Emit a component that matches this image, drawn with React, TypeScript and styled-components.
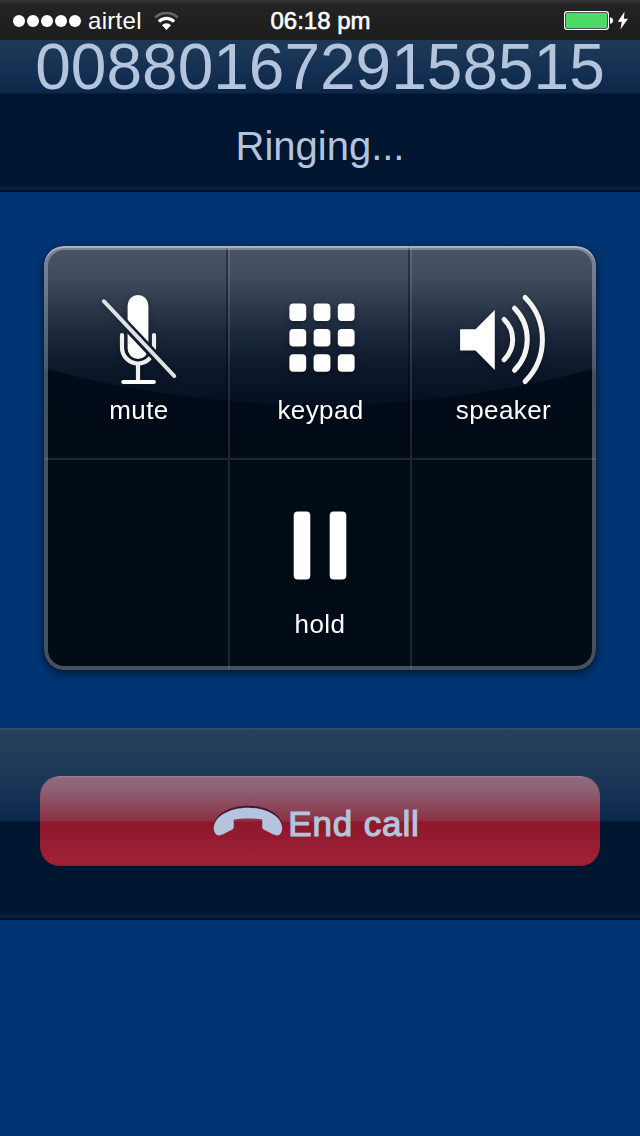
import React from "react";
import styled, { createGlobalStyle, css } from "styled-components";

const Global = createGlobalStyle`
  html, body { margin: 0; padding: 0; }
  body { background: #003472; font-family: "Liberation Sans", Arial, sans-serif; }
`;

const glossBar = css`
  background: linear-gradient(
    to bottom,
    #35506b 0, #25405c 3px, #233e5b 20px, #1b3656 52px, #0f2b4e 84px, #0b2749 93px,
    #02162e 94px, #001530 96px, #001530 186px,
    #0a1f3a 187px, #0c213d 190px, #000d22 190px, #000d22 192px
  );
`;

const Screen = styled.main`
  width: 640px;
  height: 1136px;
  display: flex;
  flex-direction: column;
  background: #003472;
  overflow: hidden;
`;

const Header = styled.header`
  ${glossBar}
  height: 192px;
  flex: none;
  color: #b3c4dc;
  text-align: center;
`;

const StatusBar = styled.div`
  height: 40px;
  display: grid;
  grid-template-columns: 1fr auto 1fr;
  align-items: center;
  padding: 2px 11px 0 12px;
  box-sizing: border-box;
  background: linear-gradient(#343434, #232323 5px, #1d1d1d);
  color: #fff;
  font-size: 24px;
  line-height: 26px;
`;

const StatusGroup = styled.div<{ $end?: boolean }>`
  display: flex;
  align-items: center;
  justify-content: ${(p) => (p.$end ? "flex-end" : "flex-start")};
`;

const Dots = styled.div`
  display: flex;
  gap: 2px;
  margin: 0 7px 1px 1px;
`;

const Dot = styled.i`
  width: 12px;
  height: 12px;
  border-radius: 50%;
  background: #fff;
`;

const Carrier = styled.span`
  letter-spacing: 0.3px;
  margin-right: 12px;
`;

const Clock = styled.span`
  -webkit-text-stroke: 0.6px #fff;
`;

const CallerNumber = styled.h1`
  margin: 0;
  height: 54px;
  font-size: 64px;
  font-weight: 400;
  line-height: 55px;
`;

const CallState = styled.p`
  margin: 0;
  padding-top: 29px;
  font-size: 40px;
  line-height: 46px;
`;

const Panel = styled.section`
  position: relative;
  flex: none;
  width: 552px;
  height: 424px;
  margin: 54px 44px 58px;
  display: grid;
  grid-template-columns: 182px 182px 188px;
  grid-template-rows: 212px 212px;
  border-radius: 20px;
  overflow: hidden;
  background:
    radial-gradient(circle 1074px at 276px -915px, transparent 1073px, #010b19 1074px, #010b17 1094px, #020c16 1130px),
    linear-gradient(#4b5567 0, #424c5e 30px, #2b3649 65px, #1a263a 90px, #0c1829 125px, #051121 160px);
  &::after {
    content: "";
    position: absolute;
    inset: 0;
    border-radius: 20px;
    box-shadow: inset 0 2px rgba(215, 218, 230, 0.55), inset 0 0 0 4px rgba(235, 240, 255, 0.3);
    pointer-events: none;
  }
`;

const PanelWrap = styled.div`
  display: flex;
  filter: drop-shadow(0 3px 4px rgba(0, 8, 25, 0.7));
`;

const Cell = styled.button<{ $col: number; $row: number }>`
  border: 0;
  border-left: ${(p) => (p.$col ? "2px solid rgba(255,255,255,0.11)" : "2px solid transparent")};
  border-top: ${(p) => (p.$row ? "2px solid rgba(255,255,255,0.11)" : "2px solid transparent")};
  background: none;
  box-shadow: ${(p) => (p.$col && !p.$row ? "-2px 0 rgba(0,5,15,0.4)" : "none")};
  display: flex;
  flex-direction: column;
  align-items: center;
  box-sizing: border-box;
  color: #fff;
  font: 26px/30px "Liberation Sans", Arial, sans-serif;
  letter-spacing: 0.4px;
  padding: ${(p) => (p.$row ? 39 : 37)}px ${(p) => [0, 0, 2][p.$col]}px 0 ${(p) => (p.$col === 0 ? 4 : p.$row ? 0 : 1)}px;
  margin: 0 ${(p) => (p.$col < 2 ? -2 : 0)}px 0 ${(p) => (p.$col ? 2 : 0)}px;
`;

const CellIcon = styled.svg`
  width: 110px;
  height: 110px;
  flex: none;
  filter: drop-shadow(0 3px 3px rgba(0, 0, 0, 0.35));
`;

const Footer = styled.footer`
  ${glossBar}
  height: 192px;
  flex: none;
  box-sizing: border-box;
  padding: 48px 40px;
`;

const EndButton = styled.button`
  width: 560px;
  height: 90px;
  padding: 0 7px 0 0;
  border: 0;
  border-radius: 20px;
  display: flex;
  align-items: center;
  justify-content: center;
  gap: 5px;
  color: #b3c4dc;
  background: linear-gradient(
    #a08294 0, #8e697d 2px, #8e6478 10px, #8e566a 20px, #8d4053 35px, #8d3044 45px,
    #8c172b 46px, #8f182c 50px, #a12338 88px, #7c1e34 90px
  );
`;

const EndLabel = styled.span`
  padding-top: 6px;
  font: 35px/40px "Liberation Sans", Arial, sans-serif;
  letter-spacing: 0.85px;
  -webkit-text-stroke: 1.2px #b3c4dc;
`;

const rows = [0, 25.5, 50.8];
const cols = [0, 24.2, 48.4];

const MuteIcon = () => (
  <CellIcon viewBox="84 285 110 110">
    <mask id="slashGap" maskUnits="userSpaceOnUse" x="84" y="285" width="110" height="110">
      <rect x="84" y="285" width="110" height="110" fill="#fff" />
      <path d="M103.3 301 174.7 376.7" stroke="#000" strokeWidth="9.5" />
    </mask>
    <g mask="url(#slashGap)">
      <rect x="127.6" y="295" width="20.8" height="64" rx="10.4" fill="#fff" />
      <path d="M122 335V347.5A16 16 0 0 0 154 347.5V335" fill="none" stroke="#eee" strokeWidth="4.2" strokeLinecap="round" />
    </g>
    <path d="M138 363V381" stroke="#eee" strokeWidth="4.2" />
    <path d="M123.3 382H153.8" stroke="#fff" strokeWidth="4.2" strokeLinecap="round" />
    <path d="M103.8 301.2 174.3 376.2" stroke="#dfe1e5" strokeWidth="3.9" strokeLinecap="round" />
  </CellIcon>
);

const KeypadIcon = () => (
  <CellIcon viewBox="266 285 110 110">
    {rows.map((y) =>
      cols.map((x) => (
        <rect key={`${x}-${y}`} x={289.4 + x} y={303.4 + y} width="16.8" height="17.6" rx="4" fill="#fff" />
      )),
    )}
  </CellIcon>
);

const SpeakerIcon = () => (
  <CellIcon viewBox="448.5 285 110 110">
    <path d="M459.6 329.3H475L494.3 310V370L475 350.4H459.6Z" fill="#fff" />
    <g fill="none" stroke="#f4f4f4" strokeWidth="5" strokeLinecap="round">
      <path d="M503.6 319.5A27.8 27.8 0 0 1 503.6 359.7" />
      <path d="M514 308.2A44.2 44.2 0 0 1 514 370.3" />
      <path d="M524.6 297.5A59.6 59.6 0 0 1 524.6 381.5" />
    </g>
  </CellIcon>
);

const HoldIcon = () => (
  <CellIcon viewBox="265 499 110 110">
    <rect x="293.7" y="511.4" width="16.6" height="68" rx="4" fill="#fff" />
    <rect x="329.7" y="511.4" width="16.6" height="68" rx="4" fill="#fff" />
  </CellIcon>
);

const WifiIcon = () => (
  <svg width="25" height="18" viewBox="0 0 25 18" fill="none">
    <path d="M1.2 5.6A16 16 0 0 1 23.8 5.6" stroke="#666" strokeWidth="2.8" />
    <path d="M4.9 9.6A10.8 10.8 0 0 1 20.1 9.6" stroke="#fff" strokeWidth="3.2" />
    <path d="M8 13.2A6.2 6.2 0 0 1 17 13.2L12.5 18Z" fill="#fff" />
  </svg>
);

const BatteryIcon = () => (
  <svg width="65" height="20" viewBox="564 11 65 20">
    <rect x="564.6" y="11.6" width="43.8" height="17.8" rx="2.6" fill="none" stroke="#fff" strokeWidth="1.2" />
    <rect x="566" y="13" width="41" height="15" rx="1.2" fill="#4cd964" />
    <path d="M610 17.2C612 17.5 613 18.8 613 20.5S612 23.5 610 23.8Z" fill="#fff" />
    <path d="M624.6 11.5 617.8 21.8H621.8L620.4 29.5 628 18.8H623.8Z" fill="#fff" />
  </svg>
);

const handset =
  "M248 807.8C230 807.8 213.8 816 213.8 828.5C213.8 832.5 216.500 835.8 219.500 835.4C223 834.800 228 831.500 231 830.200C233.300 829.200 233.800 828.500 233.800 826V819.5C240 818 256 818 262.200 819.5V826C262.200 828.500 262.700 829.200 265 830.200C268 831.500 273 834.800 276.500 835.4C279.500 835.8 282.200 832.5 282.200 828.5C282.200 816 266 807.8 248 807.8Z";

const HandsetIcon = () => (
  <svg width="70" height="34" viewBox="213 804 70 34">
    <path d={handset} transform="translate(0 -2)" fill="#3f1838" />
    <path d={handset} fill="#b3c4dc" />
  </svg>
);

export default function App() {
  return (
    <>
      <Global />
      <Screen>
        <Header>
          <StatusBar>
            <StatusGroup>
              <Dots>
                {[0, 1, 2, 3, 4].map((n) => <Dot key={n} />)}
              </Dots>
              <Carrier>airtel</Carrier>
              <WifiIcon />
            </StatusGroup>
            <Clock>06:18 pm</Clock>
            <StatusGroup $end>
              <BatteryIcon />
            </StatusGroup>
          </StatusBar>
          <CallerNumber>0088016729158515</CallerNumber>
          <CallState>Ringing...</CallState>
        </Header>
        <PanelWrap>
          <Panel>
            <Cell $col={0} $row={0}><MuteIcon />mute</Cell>
            <Cell $col={1} $row={0}><KeypadIcon />keypad</Cell>
            <Cell $col={2} $row={0}><SpeakerIcon />speaker</Cell>
            <Cell $col={0} $row={1} />
            <Cell $col={1} $row={1}><HoldIcon />hold</Cell>
            <Cell $col={2} $row={1} />
          </Panel>
        </PanelWrap>
        <Footer>
          <EndButton><HandsetIcon /><EndLabel>End call</EndLabel></EndButton>
        </Footer>
      </Screen>
    </>
  );
}
